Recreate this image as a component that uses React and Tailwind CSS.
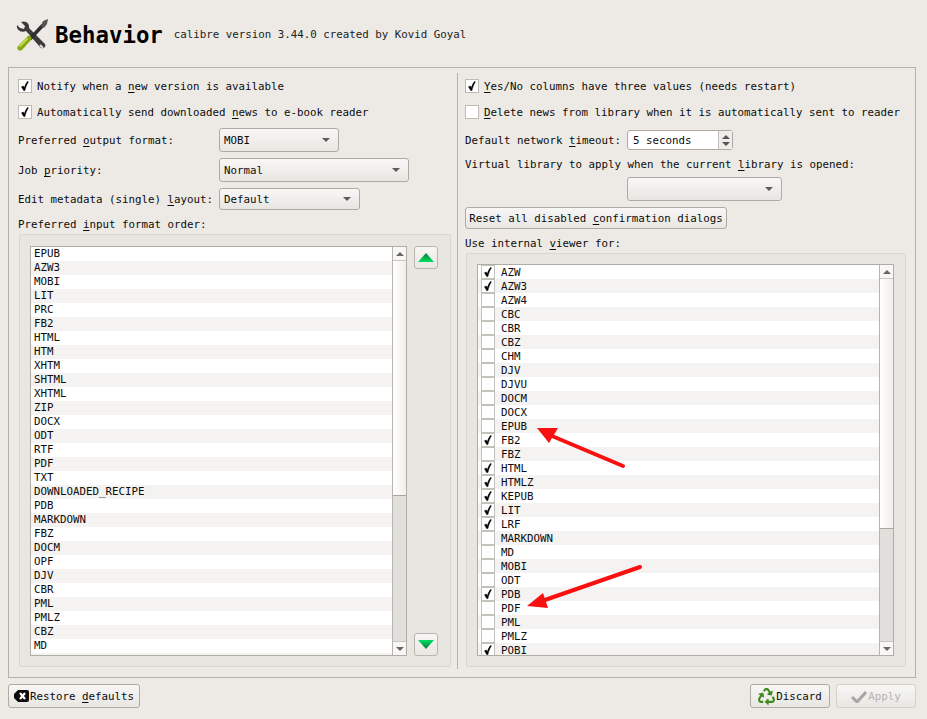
import React from "react";
import { FaRecycle } from "react-icons/fa";

const Check = () => (
  <svg width="10" height="11" viewBox="0 0 10 11" className="block">
    <path d="M1.5 5.8 L3.7 9.6 L4.9 9.6 C5.6 6.6 6.6 3.6 8.4 0.8 L7.4 0.6 C5.9 2.6 4.9 4.8 4.3 6.8 L3.3 5.1 Z" fill="#000" stroke="#000" strokeWidth="0.5" />
  </svg>
);

const Tri = ({ up, c = "#666", w = 10, h = 5 }) => (
  <svg width={w} height={h} viewBox="0 0 10 5" className="block">
    <path d={up ? "M0 5 L5 0 L10 5 Z" : "M0 0 L10 0 L5 5 Z"} fill={c} />
  </svg>
);

const CheckRow = ({ on, children, cls = "mb-3" }) => (
  <div className={`flex items-center h-[14px] gap-[5px] ${cls}`}>
    <div className="w-[14px] h-[14px] border border-[#bdbab4] bg-white flex items-center justify-center shrink-0">
      {on && <Check />}
    </div>
    <span className="whitespace-nowrap pt-[2px]">{children}</span>
  </div>
);

const Select = ({ w, h, text, cls = "" }) => (
  <div
    style={{ width: w, height: h }}
    className={`flex items-center justify-between border border-[#aeaba5] rounded-[3px] bg-gradient-to-b from-[#f8f7f6] to-[#e8e6e2] pl-1 pr-[8px] ${cls}`}
  >
    <span className="pt-[2px]">{text}</span>
    <Tri c="#5c5c5c" w={8} h={4} />
  </div>
);

const Scrollbar = ({ thumb }) => (
  <div className="w-[14px] shrink-0 border-l border-[#b8b5af] flex flex-col bg-[#e0dfdb]">
    <div className="h-[14px] shrink-0 bg-[#f8f7f6] border-b border-[#c9c6c0] flex items-center justify-center">
      <Tri up c="#666" w={8} h={4} />
    </div>
    <div style={{ height: thumb }} className="shrink-0 bg-gradient-to-r from-[#ffffff] to-[#f1efec] border-b border-[#a9a6a0]" />
    <div className="flex-1" />
    <div className="h-[14px] shrink-0 bg-[#f8f7f6] border-t border-[#c9c6c0] flex items-center justify-center">
      <Tri c="#666" w={8} h={4} />
    </div>
  </div>
);

const leftRows = ["EPUB","AZW3","MOBI","LIT","PRC","FB2","HTML","HTM","XHTM","SHTML","XHTML","ZIP","DOCX","ODT","RTF","PDF","TXT","DOWNLOADED_RECIPE","PDB","MARKDOWN","FBZ","DOCM","OPF","DJV","CBR","PML","PMLZ","CBZ","MD","CHM"];
const rightRows = [["AZW",1],["AZW3",1],["AZW4"],["CBC"],["CBR"],["CBZ"],["CHM"],["DJV"],["DJVU"],["DOCM"],["DOCX"],["EPUB"],["FB2",1],["FBZ"],["HTML",1],["HTMLZ",1],["KEPUB",1],["LIT",1],["LRF",1],["MARKDOWN"],["MD"],["MOBI"],["ODT"],["PDB",1],["PDF"],["PML"],["PMLZ"],["POBI",1]];

const ArrowBtn = ({ up }) => (
  <div className="w-[24px] h-[23px] border border-[#b9b6b0] rounded-[3px] bg-gradient-to-b from-[#f7f6f4] to-[#e9e7e3] flex items-center justify-center">
    <svg width="16" height="9" viewBox="0 0 16 9">
      <defs>
        <linearGradient id={up ? "gu" : "gd"} x1="0" y1="0" x2="0" y2="1">
          <stop offset="0" stopColor={up ? "#0a7a3a" : "#00e060"} />
          <stop offset="1" stopColor={up ? "#00e060" : "#0a7a3a"} />
        </linearGradient>
      </defs>
      <path d={up ? "M0 9 L8 0 L16 9 Z" : "M0 0 L16 0 L8 9 Z"} fill={`url(#${up ? "gu" : "gd"})`} />
    </svg>
  </div>
);

const FootBtn = ({ w, children, disabled }) => (
  <div
    style={{ width: w }}
    className={`h-[24px] flex items-center justify-center gap-px border rounded-[3px] bg-gradient-to-b from-[#f8f7f6] to-[#e8e6e2] ${disabled ? "border-[#d2cfc9] text-[#b5b3ae]" : "border-[#aeaba5]"}`}
  >
    {children}
  </div>
);

export default function App() {
  return (
    <div
      className="relative w-[927px] h-[719px] bg-[#edeae6] text-[#0c0c0c] text-[10.8px] leading-[16px] overflow-hidden flex flex-col"
      style={{ fontFamily: '"DejaVu Sans Mono", monospace' }}
    >
      {/* header */}
      <div className="h-[67px] shrink-0 flex items-center pl-4 pt-[3px]">
        <svg width="33" height="33" viewBox="0 0 33 33" className="shrink-0">
          <path d="M5 3 L9 7 L8 10 L4 9 L1 6 C0 11 5 14 10 12 L24 28 C26 31 31 28 29 25 L13 9 C14 5 10 1 5 3 Z" fill="#3c3c3c" />
          <path d="M24 26 L27 29" stroke="#ddd" strokeWidth="2" />
          <path d="M14 20 L27 6" stroke="#2e2e2e" strokeWidth="3.5" />
          <path d="M25 7 L27 2 L32 0 L31 5 L28 9 Z" fill="#555" />
          <path d="M2 27 L12 17 C14 16 17 19 15 21 L6 31 C3 33 0 30 2 27 Z" fill="#86a90d" />
          <path d="M4 27 L11 20" stroke="#c4d74a" strokeWidth="2" strokeLinecap="round" />
        </svg>
        <span className="ml-[6px] text-[22.4px] leading-[30px] font-bold text-black">Behavior</span>
        <span className="ml-[11px] text-[#222]">calibre version 3.44.0 created by Kovid Goyal</span>
      </div>

      {/* frame */}
      <div className="ml-2 mr-[11px] h-[611px] shrink-0 border border-[#b4b1ab] flex">
        {/* left */}
        <div className="w-[448px] shrink-0 pl-[9px] pr-[6px] pt-[11px] flex flex-col">
          <CheckRow on>Notify when a <u className="underline-offset-2">n</u>ew version is available</CheckRow>
          <CheckRow on cls="mb-[9px]">Automatically send downloaded <u className="underline-offset-2">n</u>ews to e-book reader</CheckRow>
          <div className="flex items-center h-[24px] mb-[6px]">
            <span className="w-[201px] pt-[2px]">Preferred <u className="underline-offset-2">o</u>utput format:</span>
            <Select w={120} h={24} text="MOBI" />
          </div>
          <div className="flex items-center h-[24px] mb-[6px]">
            <span className="w-[201px] pt-[2px]">Job <u className="underline-offset-2">p</u>riority:</span>
            <Select w={190} h={24} text="Normal" />
          </div>
          <div className="flex items-center h-[22px] mb-[7px]">
            <span className="w-[201px] pt-[2px] whitespace-nowrap">Edit metadata (single) <u className="underline-offset-2">l</u>ayout:</span>
            <Select w={141} h={22} text="Default" />
          </div>
          <div className="h-[14px] mb-[3px]">Preferred <u className="underline-offset-2">i</u>nput format order:</div>
          <div className="h-[433px] ml-px border border-[#d9d6d0] rounded-[2px] bg-[#e9e6e1] pl-[10px] pr-[11px] pt-[11px] flex gap-[7px]">
            <div className="w-[377px] h-[410px] shrink-0 border border-[#b0ada7] bg-white flex overflow-hidden">
              <div className="flex-1 overflow-hidden">
                {leftRows.map((r, i) => (
                  <div key={r} className={`h-[14px] leading-[14px] pl-[3px] ${i % 2 ? "bg-[#f5f3f1]" : "bg-white"}`}>{r}</div>
                ))}
              </div>
              <Scrollbar thumb={235} />
            </div>
            <div className="flex flex-col justify-between h-[410px]">
              <ArrowBtn up />
              <ArrowBtn />
            </div>
          </div>
        </div>

        {/* divider */}
        <div className="w-px shrink-0 bg-[#b4b1ab] mt-[5px] mb-[8px]" />

        {/* right */}
        <div className="flex-1 pl-[7px] pr-[9px] pt-[11px] flex flex-col min-w-0">
          <CheckRow on><u className="underline-offset-2">Y</u>es/No columns have three values (needs restart)</CheckRow>
          <CheckRow cls="mb-[11px]"><u className="underline-offset-2">D</u>elete news from library when it is automatically sent to reader</CheckRow>
          <div className="flex items-center h-[20px] mb-[7px]">
            <span className="w-[162px] pt-[2px] whitespace-nowrap">Default network <u className="underline-offset-2">t</u>imeout:</span>
            <div className="w-[106px] h-[20px] border border-[#aeaba5] rounded-[3px] bg-white flex">
              <span className="flex-1 pl-[5px] leading-[19px]">5 seconds</span>
              <div className="w-[14px] border-l border-[#c4c1bb] bg-[#efedea] flex flex-col items-center justify-center gap-[3px]">
                <Tri up c="#555" w={8} h={4} />
                <Tri c="#555" w={8} h={4} />
              </div>
            </div>
          </div>
          <div className="h-[14px] mb-[6px] whitespace-nowrap">Virtual library to apply when the current <u className="underline-offset-2">l</u>ibrary is opened:</div>
          <div className="pl-[162px] mb-[6px]">
            <Select w={155} h={24} text="" />
          </div>
          <div className="w-[262px] h-[22px] pt-px border border-[#aeaba5] rounded-[3px] bg-gradient-to-b from-[#f8f7f6] to-[#e8e6e2] flex items-center justify-center mb-[7px]">
            <span className="whitespace-pre">Reset all disabled <u className="underline-offset-2">c</u>onfirmation dialogs</span>
          </div>
          <div className="h-[14px] mb-[3px]">Use internal <u className="underline-offset-2">v</u>iewer for:</div>
          <div className="w-[440px] h-[414px] ml-px border border-[#d9d6d0] rounded-[2px] bg-[#e9e6e1] pl-[10px] pr-[11px] pt-[10px]">
            <div className="w-[417px] h-[392px] border border-[#b0ada7] bg-white flex overflow-hidden">
              <div className="flex-1 overflow-hidden">
                {rightRows.map(([r, on], i) => (
                  <div key={r} className={`h-[14px] flex items-center pl-[3px] ${i % 2 ? "bg-[#f5f3f1]" : "bg-white"}`}>
                    <div className="w-[14px] h-[14px] border border-[#c4c1bb] bg-white flex items-center justify-center shrink-0">
                      {on && <Check />}
                    </div>
                    <span className="ml-[6px] pt-[2px]">{r}</span>
                  </div>
                ))}
              </div>
              <Scrollbar thumb={250} />
            </div>
          </div>
        </div>
      </div>

      {/* footer */}
      <div className="flex items-center ml-2 mr-[11px] mt-[6px]">
        <FootBtn w={132}>
          <svg width="15" height="12" viewBox="0 0 15 12" className="shrink-0">
            <path d="M4 0 H13 Q15 0 15 2 V10 Q15 12 13 12 H4 L0 8 V4 Z" fill="#0c0c0c" />
            <path d="M6 3 L11 9 M11 3 L6 9" stroke="#fff" strokeWidth="2.2" />
          </svg>
          <span className="pt-[2px]">Restore <u className="underline-offset-2">d</u>efaults</span>
        </FootBtn>
        <div className="flex-1" />
        <FootBtn w={80}>
          <FaRecycle size={17} color="#3f8a1e" className="shrink-0" />
          <span className="pt-[2px]">Discard</span>
        </FootBtn>
        <div className="w-[6px]" />
        <FootBtn w={80} disabled>
          <svg width="16" height="13" viewBox="0 0 16 13" className="shrink-0">
            <path d="M1 7 L6 12 L15 2" stroke="#a8a6a1" strokeWidth="3" fill="none" />
          </svg>
          <span className="pt-[2px]">Apply</span>
        </FootBtn>
      </div>

      {/* annotation arrows */}
      <svg width="927" height="719" className="absolute left-0 top-0 pointer-events-none">
        <path d="M623 466 L552 436" stroke="#f91010" strokeWidth="4" strokeLinecap="round" />
        <path d="M537 428 L558 428 L549 443 Z" fill="#f91010" />
        <path d="M640 567 L542 601" stroke="#f91010" strokeWidth="4" strokeLinecap="round" />
        <path d="M527 606 L543 593 L548 608 Z" fill="#f91010" />
      </svg>
    </div>
  );
}
